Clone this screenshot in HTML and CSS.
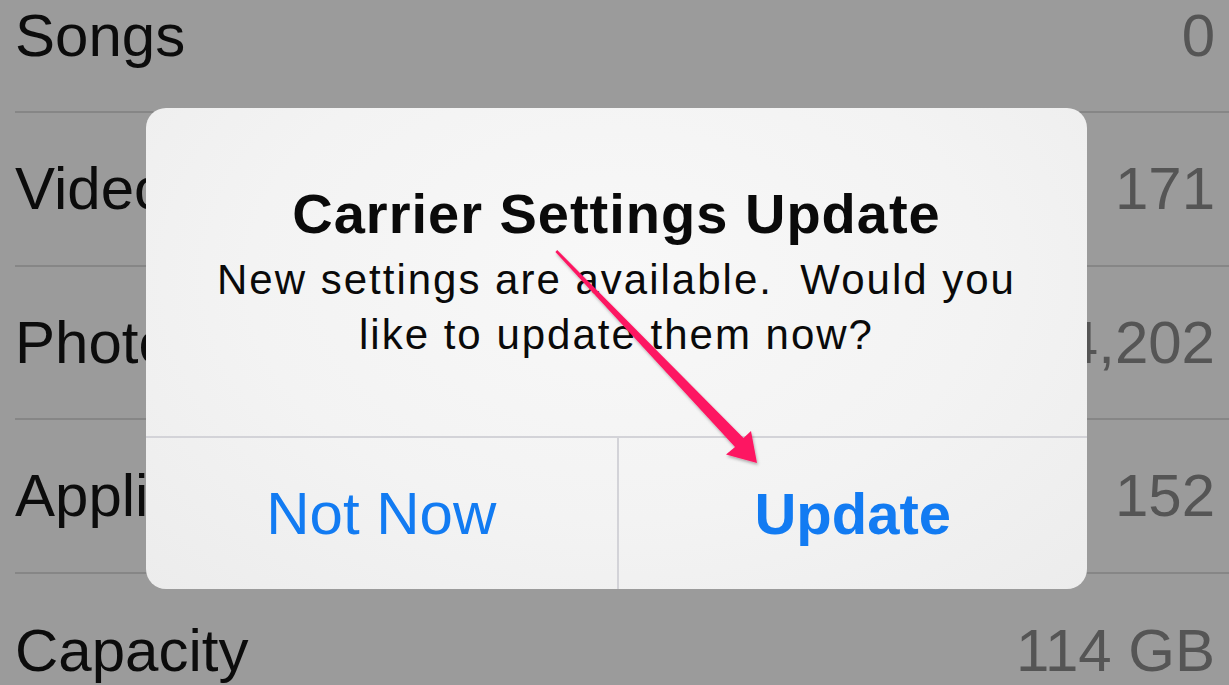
FILE: index.html
```html
<!DOCTYPE html>
<html lang="en">
<head>
<meta charset="utf-8">
<title>Carrier Settings Update</title>
<link rel="stylesheet" href="styles.css">
</head>
<body>
<div class="screen">
  <ul class="list">
    <li class="row"><span class="label">Songs</span><span class="value">0</span></li>
    <li class="row"><span class="label">Videos</span><span class="value">171</span></li>
    <li class="row"><span class="label">Photos</span><span class="value">4,202</span></li>
    <li class="row"><span class="label">Applications</span><span class="value">152</span></li>
    <li class="row last"><span class="label">Capacity</span><span class="value">114 GB</span></li>
  </ul>

  <div class="alert">
    <div class="alert-body">
      <h1 class="alert-title">Carrier Settings Update</h1>
      <p class="alert-msg">New settings are available.&nbsp; Would you<br>like to update them now?</p>
    </div>
    <div class="alert-actions">
      <button class="alert-btn">Not Now</button>
      <button class="alert-btn primary">Update</button>
    </div>
  </div>

  <svg class="arrow" width="1229" height="685" viewBox="0 0 1229 685" aria-hidden="true">
    <defs>
      <filter id="sh" x="-10%" y="-10%" width="130%" height="130%">
        <feDropShadow dx="1" dy="2" stdDeviation="1.5" flood-color="#000" flood-opacity="0.3"/>
      </filter>
    </defs>
    <polygon filter="url(#sh)" fill="#fd1862"
      points="557.2,250 743.5,438 751,431 757,463 726,454.5 735,447 555.4,252"/>
  </svg>
</div>
</body>
</html>
```
FILE: styles.css
```css
* { box-sizing: border-box; }
html, body {
  margin: 0;
  padding: 0;
  width: 1229px;
  height: 685px;
  overflow: hidden;
  background: #9a9a9a;
  font-family: "Liberation Sans", Arial, sans-serif;
}
.screen {
  position: relative;
  width: 1229px;
  height: 685px;
  overflow: hidden;
  background: #9b9b9b;
}
.list {
  list-style: none;
  margin: -40.5px 0 0 15px;
  padding: 0;
  display: flex;
  flex-direction: column;
}
.row {
  height: 153.5px;
  display: flex;
  align-items: center;
  justify-content: space-between;
  padding-right: 14px;
  border-bottom: 2px solid #868686;
  font-size: 60px;
}
.row.last { border-bottom: none; }
.label { color: #0c0c0c; }
.value { color: #555555; }

.alert {
  position: absolute;
  left: 146px;
  top: 108px;
  width: 941px;
  height: 481px;
  border-radius: 20px;
  background: radial-gradient(ellipse at 50% 35%, #f8f8f8 0%, #f3f3f3 55%, #ececec 100%);
  display: flex;
  flex-direction: column;
  overflow: hidden;
}
.alert-body {
  height: 328px;
  padding-top: 76px;
  text-align: center;
}
.alert-title {
  margin: 0;
  font-size: 56px;
  line-height: 60px;
  font-weight: 700;
  letter-spacing: 1px;
  color: #0a0a0a;
}
.alert-msg {
  margin: 8px 0 0;
  font-size: 42px;
  line-height: 55px;
  letter-spacing: 2px;
  color: #0a0a0a;
}
.alert-actions {
  flex: 1;
  display: grid;
  grid-template-columns: 1fr 1fr;
  border-top: 2px solid #d3d3d8;
}
.alert-btn {
  border: none;
  background: transparent;
  font-family: "Liberation Sans", Arial, sans-serif;
  font-size: 60px;
  color: #127bf2;
  padding: 0;
  display: flex;
  align-items: center;
  justify-content: center;
}
.alert-btn + .alert-btn { border-left: 2px solid #d3d3d8; }
.alert-btn.primary { font-weight: 700; font-size: 58px; }
.arrow {
  position: absolute;
  left: 0;
  top: 0;
  pointer-events: none;
}
```
